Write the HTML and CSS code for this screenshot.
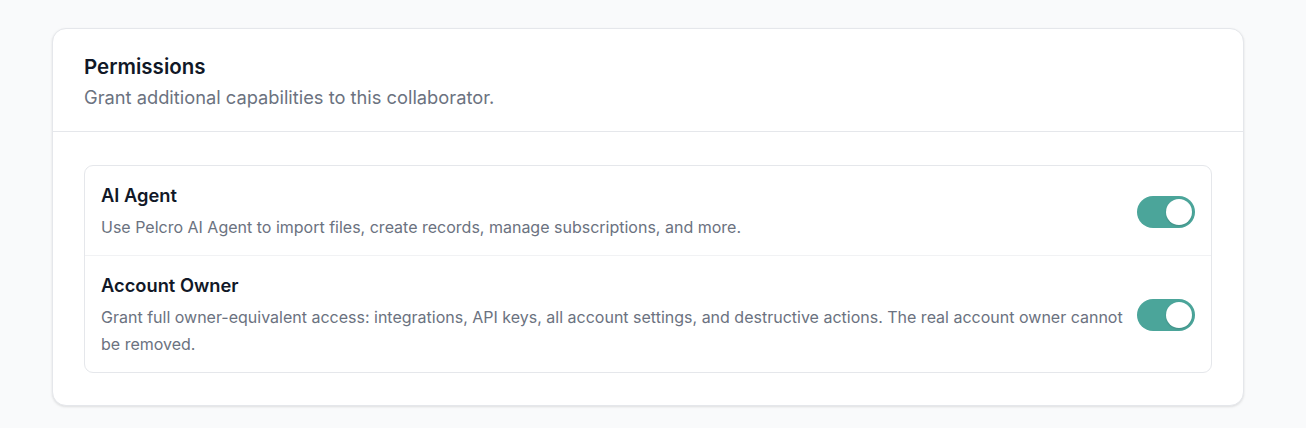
FILE: index.html
```html
<!DOCTYPE html>
<html lang="en">
<head>
<meta charset="utf-8">
<title>Permissions</title>
<link rel="stylesheet" href="styles.css">
</head>
<body>
<main class="page">
  <section class="card">
    <header class="card-header">
      <h2 class="card-title">Permissions</h2>
      <p class="card-subtitle">Grant additional capabilities to this collaborator.</p>
    </header>
    <div class="card-body">
      <ul class="perm-list">
        <li class="perm-row">
          <div class="perm-text">
            <h3 class="perm-name">AI Agent</h3>
            <p class="perm-desc">Use Pelcro AI Agent to import files, create records, manage subscriptions, and more.</p>
          </div>
          <button class="toggle is-on" type="button" role="switch" aria-checked="true" aria-label="AI Agent"><span class="toggle-knob"></span></button>
        </li>
        <li class="perm-row">
          <div class="perm-text">
            <h3 class="perm-name">Account Owner</h3>
            <p class="perm-desc">Grant full owner-equivalent access: integrations, API keys, all account settings, and destructive actions. The real account owner cannot be removed.</p>
          </div>
          <button class="toggle is-on" type="button" role="switch" aria-checked="true" aria-label="Account Owner"><span class="toggle-knob"></span></button>
        </li>
      </ul>
    </div>
  </section>
</main>
</body>
</html>
```

FILE: styles.css
```css
* { box-sizing: border-box; }

html, body {
  margin: 0;
  padding: 0;
  background: #f9fafb;
  font-family: Inter, "Noto Sans", "Liberation Sans", sans-serif;
  color: #111827;
}

.page {
  padding: 28px 62px 22px 52px;
}

.card {
  background: #ffffff;
  border: 1px solid #e5e7eb;
  border-radius: 14px;
  box-shadow: 0 1px 3px rgba(0, 0, 0, 0.08), 0 1px 2px rgba(0, 0, 0, 0.04);
}

.card-header {
  padding: 22px 31px 20px;
  border-bottom: 1px solid #e5e7eb;
}

.card-title {
  margin: 0;
  font-size: 20.5px;
  line-height: 32px;
  font-weight: 600;
  color: #111827;
}

.card-subtitle {
  margin: 1px 0 0;
  font-size: 18.3px;
  line-height: 27px;
  color: #6b7280;
}

.card-body {
  padding: 33px 31px 32px;
}

.perm-list {
  list-style: none;
  margin: 0;
  padding: 0;
  border: 1px solid #e5e7eb;
  border-radius: 9px;
}

.perm-row {
  display: flex;
  align-items: center;
  gap: 12px;
  padding: 16px 16px 14px 16px;
}

.perm-row + .perm-row {
  border-top: 1px solid #f1f2f4;
}

.perm-text {
  flex: 1;
  min-width: 0;
}

.perm-name {
  margin: 0;
  font-size: 18.3px;
  line-height: 27px;
  font-weight: 600;
  color: #111827;
}

.perm-desc {
  margin: 5px 0 0;
  font-size: 16px;
  line-height: 27px;
  color: #6b7280;
}

.toggle {
  flex: none;
  position: relative;
  width: 58px;
  height: 32px;
  padding: 0;
  border: 0;
  border-radius: 999px;
  background: #4ba59a;
  cursor: pointer;
}

.toggle-knob {
  position: absolute;
  top: 3px;
  left: 29px;
  width: 26px;
  height: 26px;
  border-radius: 50%;
  background: #ffffff;
  box-shadow: 0 1px 2px rgba(0, 0, 0, 0.15);
}
```
